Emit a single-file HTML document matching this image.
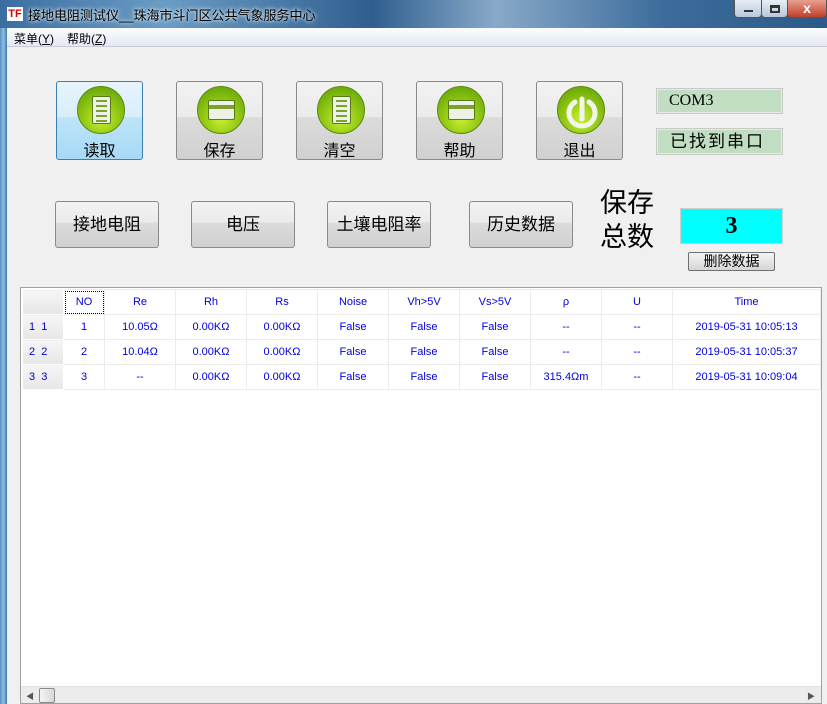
<!DOCTYPE html>
<html><head><meta charset="utf-8"><style>
*{margin:0;padding:0;box-sizing:border-box}
body{width:827px;height:704px;overflow:hidden;background:#f0f0f0;font-family:"Liberation Sans","Noto Sans CJK SC",sans-serif;position:relative}
.abs{position:absolute}
#title{left:0;top:0;width:827px;height:28px;background:linear-gradient(90deg,#3a6ea0 0%,#6b9cc4 20%,#2f5f8f 45%,#88a9c9 60%,#3d6d9c 80%,#2b5a88 100%)}
#title span{position:absolute;left:28px;top:5px;font-size:13px;color:#000;text-shadow:0 0 6px #cfe3f5,0 0 3px #fff}
#logo{left:7px;top:7px;width:16px;height:14px;background:#fff;font:bold 11px "Liberation Sans";color:#d00;text-align:center;line-height:14px}
#lb{left:0;top:28px;width:7px;height:676px;background:linear-gradient(90deg,#5b8fc0,#8ec0e6,#3f77aa)}
#menu{left:7px;top:28px;width:820px;height:19px;background:linear-gradient(#fbfcfe,#e4e8f3);border-bottom:1px solid #c7ccd8;font-size:12px}
#menu span{position:absolute;top:2px}
.wb{top:0;height:18px;border:1px solid #555;border-top:none;border-radius:0 0 4px 4px}
.big{width:87px;height:79px;border:1px solid #8a8a8a;border-radius:3px;background:linear-gradient(#f2f2f2 0%,#ebebeb 45%,#dcdcdc 46%,#d0d0d0 100%);text-align:center}
.big.sel{border-color:#3c7fb1;background:linear-gradient(#e6f4fc 0%,#d9eefa 45%,#bde4f8 46%,#a7d9f5 100%)}
.ic{position:absolute;left:20px;top:4px;width:48px;height:48px;border-radius:50%;background:radial-gradient(circle at 50% 70%,#c9f030 0%,#8cc312 50%,#5a9a08 100%);border:1px solid #5c8a10}
.doc{position:absolute;left:14px;top:9px;width:19px;height:28px;background:#eef2e6;border:1px solid #567c18;border-radius:2px}
.doc i{display:block;height:2px;background:#7ea22c;margin:3px 3px 0 3px}
.card{position:absolute;left:10px;top:13px;width:27px;height:20px;background:#eef2e6;border:1px solid #567c18;border-radius:2px}
.big b{position:absolute;left:0;right:0;top:55px;font-weight:normal;font-size:16px}
.sm{width:104px;height:47px;border:1px solid #8a8a8a;border-radius:3px;background:linear-gradient(#f2f2f2 0%,#ebebeb 45%,#dcdcdc 46%,#d0d0d0 100%);text-align:center;line-height:45px;font-size:17px}
.g{background:#c2dec2;border:1px solid #c9c9c9;box-shadow:inset 0 0 0 1px #e8e8e8;font-size:17px}
#grid{left:20px;top:287px;width:802px;height:417px;background:#fff;border:1px solid #a0a0a0}
table{border-collapse:collapse;position:absolute;left:1px;top:1px;font-size:11px;color:#0000e0;table-layout:fixed}
td{height:25px;border:1px solid #ececec;text-align:center;padding:0}
td.rh{background:linear-gradient(#f6f6f6,#e6e6e6);color:#0000c0;text-align:left;padding-left:6px;border-color:#fff}
</style></head><body>
<div id="title" class="abs"><div id="logo" class="abs">TF</div><span>接地电阻测试仪__珠海市斗门区公共气象服务中心</span>
<div class="abs wb" style="left:734px;width:28px;background:linear-gradient(#e6edf5,#b8c8da)"><div class="abs" style="left:9px;top:10px;width:9px;height:2px;background:#fff;border:1px solid #333"></div></div>
<div class="abs wb" style="left:761px;width:27px;background:linear-gradient(#e6edf5,#b8c8da)"><div class="abs" style="left:8px;top:5px;width:10px;height:8px;border:2px solid #333;border-top-width:3px"></div></div>
<div class="abs wb" style="left:787px;width:40px;background:linear-gradient(#e8a090,#c2402a);color:#fff;font:bold 14px 'Liberation Sans';text-align:center;line-height:16px">x</div>
</div>
<div id="lb" class="abs"></div>
<div id="menu" class="abs"><span style="left:7px">菜单(<u>Y</u>)</span><span style="left:60px">帮助(<u>Z</u>)</span></div>

<div class="abs big sel" style="left:56px;top:81px"><div class="ic"><div class="doc"><i></i><i></i><i></i><i></i><i></i></div></div><b>读取</b></div>
<div class="abs big" style="left:176px;top:81px"><div class="ic"><div class="card"><div style="height:4px;background:#7ea22c;margin-top:4px"></div></div></div><b>保存</b></div>
<div class="abs big" style="left:296px;top:81px"><div class="ic"><div class="doc"><i></i><i></i><i></i><i></i><i></i></div></div><b>清空</b></div>
<div class="abs big" style="left:416px;top:81px"><div class="ic"><div class="card"><div style="height:4px;background:#7ea22c;margin-top:4px"></div></div></div><b>帮助</b></div>
<div class="abs big" style="left:536px;top:81px"><div class="ic"><svg width="48" height="48" style="position:absolute;left:0;top:0"><path d="M17 15 A13 13 0 1 0 31 15" fill="none" stroke="#f2f6ea" stroke-width="5" stroke-linecap="round"/><path d="M24 12 V32" stroke="#f2f6ea" stroke-width="5" stroke-linecap="round"/></svg></div><b>退出</b></div>

<div class="abs g" style="left:656px;top:88px;width:127px;height:26px;padding-left:12px;line-height:24px;font-family:'Liberation Serif',serif;font-size:16px">COM3</div>
<div class="abs g" style="left:656px;top:128px;width:127px;height:27px;padding-left:13px;line-height:25px;letter-spacing:2px">已找到串口</div>

<div class="abs sm" style="left:55px;top:201px">接地电阻</div>
<div class="abs sm" style="left:191px;top:201px">电压</div>
<div class="abs sm" style="left:327px;top:201px">土壤电阻率</div>
<div class="abs sm" style="left:469px;top:201px">历史数据</div>

<div class="abs" style="left:600px;top:186px;font-size:27px;line-height:34px;width:60px">保存<br>总数</div>
<div class="abs" style="left:680px;top:208px;width:103px;height:36px;background:#0ff;border:1px solid #cfcfcf;text-align:center;font:bold 24px/34px 'Liberation Serif',serif">3</div>
<div class="abs" style="left:688px;top:252px;width:87px;height:19px;border:1px solid #707070;border-radius:2px;background:linear-gradient(#f4f4f4,#d6d6d6);text-align:center;font-size:14px;line-height:17px">删除数据</div>

<div id="grid" class="abs">
<table>
<tr><td class="rh" style="width:41px"></td><td style="width:41px;outline:1px dotted #000;outline-offset:-2px;background:#fff">NO</td><td style="width:71px">Re</td><td style="width:71px">Rh</td><td style="width:71px">Rs</td><td style="width:71px">Noise</td><td style="width:71px">Vh&gt;5V</td><td style="width:71px">Vs&gt;5V</td><td style="width:71px">ρ</td><td style="width:71px">U</td><td style="width:148px">Time</td></tr>
<tr><td class="rh">1&nbsp;&nbsp;1</td><td>1</td><td>10.05Ω</td><td>0.00KΩ</td><td>0.00KΩ</td><td>False</td><td>False</td><td>False</td><td>--</td><td>--</td><td>2019-05-31 10:05:13</td></tr>
<tr><td class="rh">2&nbsp;&nbsp;2</td><td>2</td><td>10.04Ω</td><td>0.00KΩ</td><td>0.00KΩ</td><td>False</td><td>False</td><td>False</td><td>--</td><td>--</td><td>2019-05-31 10:05:37</td></tr>
<tr><td class="rh">3&nbsp;&nbsp;3</td><td>3</td><td>--</td><td>0.00KΩ</td><td>0.00KΩ</td><td>False</td><td>False</td><td>False</td><td>315.4Ωm</td><td>--</td><td>2019-05-31 10:09:04</td></tr>
</table>
<div class="abs" style="left:0;bottom:0;width:800px;height:17px;background:#ececec;border-top:1px solid #e0e0e0">
<div class="abs" style="left:5px;top:4px;font-size:8px;color:#555">◀</div>
<div class="abs" style="left:18px;top:1px;width:16px;height:15px;border:1px solid #8a8a8a;border-radius:2px;background:linear-gradient(90deg,#f4f4f4,#d8d8d8)"></div>
<div class="abs" style="right:6px;top:4px;font-size:8px;color:#555">▶</div>
</div>
</div>
</body></html>
